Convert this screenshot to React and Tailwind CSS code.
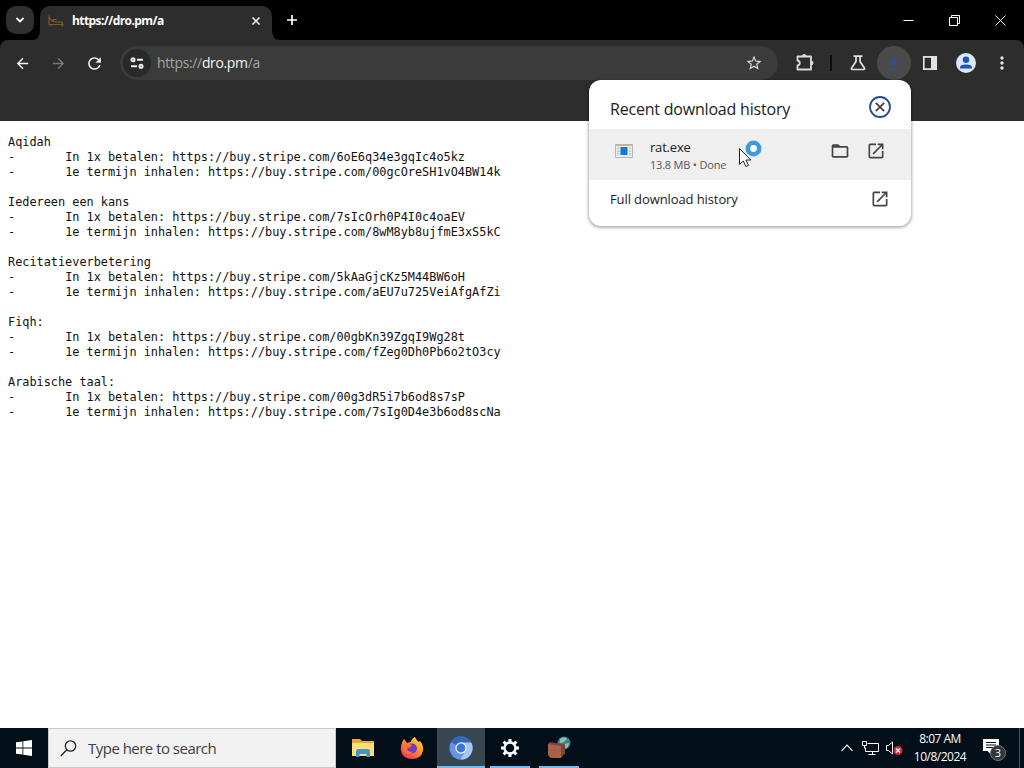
import React from 'react';
import { MdArrowBack, MdArrowForward, MdRefresh, MdStarBorder, MdOpenInNew, MdMoreVert, MdFolderOpen } from 'react-icons/md';

const sections = [
  {
    title: 'Aqidah',
    once: 'https://buy.stripe.com/6oE6q34e3gqIc4o5kz',
    term: 'https://buy.stripe.com/00gcOreSH1vO4BW14k',
  },
  {
    title: 'Iedereen een kans',
    once: 'https://buy.stripe.com/7sIcOrh0P4I0c4oaEV',
    term: 'https://buy.stripe.com/8wM8yb8ujfmE3xS5kC',
  },
  {
    title: 'Recitatieverbetering',
    once: 'https://buy.stripe.com/5kAaGjcKz5M44BW6oH',
    term: 'https://buy.stripe.com/aEU7u725VeiAfgAfZi',
  },
  {
    title: 'Fiqh:',
    once: 'https://buy.stripe.com/00gbKn39ZgqI9Wg28t',
    term: 'https://buy.stripe.com/fZeg0Dh0Pb6o2tO3cy',
  },
  {
    title: 'Arabische taal:',
    once: 'https://buy.stripe.com/00g3dR5i7b6od8s7sP',
    term: 'https://buy.stripe.com/7sIg0D4e3b6od8scNa',
  },
];

const TabStrip = () => (
  <div className="flex h-10 bg-black text-white">
    <div className="ml-1.5 mt-1.5 flex h-7 w-7 items-center justify-center rounded-[10px] bg-[#2f2f2f]">
      <svg width="10" height="10" viewBox="0 0 10 10" fill="none" stroke="white" strokeWidth="1.8">
        <path d="M1.5 3L5 6.5 8.5 3" />
      </svg>
    </div>
    {/* curved foot on each side of the active tab */}
    <svg className="mt-[30px] -ml-[2px]" width="8" height="10" viewBox="0 0 8 10">
      <path d="M8 0V10H0Q8 10 8 0Z" fill="#2d2d2d" />
    </svg>
    <div className="mt-1.5 flex h-[34px] w-[232px] items-center rounded-t-[10px] bg-[#2d2d2d] pb-[5px] pl-2 pr-[11px]">
      <svg width="16" height="16" viewBox="0 0 16 16" fill="none" stroke="#7c5b22" strokeWidth="1.2">
        <path d="M1 2.500v9h14.500M1 4.500l4 4 10 .8M5.500 8.500V6.500h3M3 11.500v1.500M14.500 9v4" />
      </svg>
      <span className="ml-2 flex-1 text-[12px] font-bold leading-4 tracking-[-0.57px]">https://dro.pm/a</span>
      <svg width="10" height="10" viewBox="0 0 10 10" stroke="white" strokeWidth="1.5">
        <path d="M1.5 1.5l7 7M8.5 1.5l-7 7" />
      </svg>
    </div>
    <svg className="mt-[30px]" width="8" height="10" viewBox="0 0 8 10">
      <path d="M0 0V10H8Q0 10 0 0Z" fill="#2d2d2d" />
    </svg>
    <svg className="ml-[6px] mt-[14px]" width="12" height="12" viewBox="0 0 12 12" stroke="white" strokeWidth="1.7">
      <path d="M6 1v10M1 6h10" />
    </svg>
    <div className="ml-auto flex items-center pr-[18px]">
      <svg className="mr-[35px]" width="11" height="11" viewBox="0 0 11 11" stroke="white" fill="none">
        <path d="M.5 5.5h10" />
      </svg>
      <svg className="mr-[35px]" width="11" height="11" viewBox="0 0 11 11" stroke="white" fill="none">
        <path d="M.5 2.5h8v8h-8zM2.5 2.5v-2h8v8h-2" />
      </svg>
      <svg width="11" height="11" viewBox="0 0 11 11" stroke="white" fill="none">
        <path d="M.5.5l10 10M10.5.5l-10 10" />
      </svg>
    </div>
  </div>
);

const Toolbar = () => (
  <div className="bg-black">
    <div className="flex h-[81px] items-start rounded-t-[8px] bg-[#2d2d2d] text-[#e4e4e4]">
      <div className="mt-[15px] flex gap-5 pl-[14px]">
        <MdArrowBack size={17} color="#f1f1f1" className="-mr-px" />
        <MdArrowForward size={17} color="#777777" className="-mr-px" />
        <MdRefresh size={19} color="#f1f1f1" className="-ml-px -mr-px -mt-px" />
      </div>
      <div className="ml-[17px] mt-[6px] flex h-[34px] w-[658px] items-center rounded-full bg-[#3b3b3b] pl-[3px]">
        <div className="flex h-7 w-7 items-center justify-center rounded-full bg-[#292929]">
          <svg width="14" height="12" viewBox="0 0 14 12" fill="none" stroke="#f1f1f1" strokeWidth="1.9">
            <circle cx="3" cy="2.8" r="1.6" />
            <path d="M7 2.8h6M1 9.2h6" />
            <circle cx="11" cy="9.2" r="1.6" />
          </svg>
        </div>
        <span className="ml-[6px] flex-1 text-[14px] leading-5 tracking-[-0.36px] text-[#a3a3a3]">
          https://<span className="text-[#f5f5f5]">dro.pm</span>/a
        </span>
        <MdStarBorder size={18} className="mr-[15px]" color="#d8d8d8" />
      </div>
      <div className="flex h-[46px] items-center">
        <svg className="ml-[17px]" width="20" height="18" viewBox="0 0 20 18" fill="none" stroke="#dcdcdc" strokeWidth="1.8" strokeLinejoin="round">
          <path d="M2.500 2.500H16v13H2.500v-4q2.300-.3 2.300-2.400T2.500 6.500z" />
          <path d="M7.200 2.500a2 2 0 0 1 4 0zM16 7a2 2 0 0 1 0 4z" fill="#dcdcdc" strokeWidth="1" />
        </svg>
        <div className="ml-[15px] h-4 w-[2px] bg-[#0c0c0c]" />
        <svg className="ml-[18px]" width="16" height="18" viewBox="0 0 16 18" fill="none" stroke="#e2e2e2" strokeWidth="1.7" strokeLinejoin="round">
          <path d="M3.500 2.200h9M6 2.200v5.300L1.600 14q-.7 1.500 1 1.500h10.800q1.700 0 1-1.500L10 7.500V2.200" />
        </svg>
        <div className="ml-[11px] flex h-[34px] w-[34px] items-center justify-center rounded-full bg-[#4a4a48]">
          <svg width="14" height="16" viewBox="0 0 14 16" fill="#30508c">
            <path d="M5.500 2h3v4.500H12L7 11.500l-5-5h3.500z" />
            <path d="M1.500 13.500h11V15h-11z" />
          </svg>
        </div>
        <svg className="ml-[11px]" width="16" height="16" viewBox="0 0 16 16">
          <path d="M1.800 1.800h12.400v12.400H1.800z" fill="none" stroke="#e2e2e2" strokeWidth="1.700" />
          <path d="M9 1.500h5.500v13H9z" fill="#e2e2e2" />
        </svg>
        <svg className="ml-[18px]" width="20" height="20" viewBox="0 0 20 20">
          <circle cx="10" cy="10" r="10" fill="#dbe7fb" />
          <circle cx="10" cy="6.800" r="3.200" fill="#1b57b8" />
          <path d="M4 15.500v-1q0-3 6-3t6 3v1z" fill="#1b57b8" />
        </svg>
        <MdMoreVert size={20} className="ml-4" />
      </div>
    </div>
  </div>
);

const DownloadBubble = () => (
  <div className="absolute left-[589px] top-20 h-[146px] w-[322px] overflow-hidden rounded-[12px] bg-white text-[#202124] shadow-[0_1px_3px_1px_rgba(0,0,0,0.3)]">
    <div className="flex h-[49px] items-center justify-between pl-[21px] pr-5">
      <span className="mt-[9px] text-[16px] leading-6 tracking-[-0.2px]">Recent download history</span>
      <svg className="mt-[5px]" width="22" height="22" viewBox="0 0 22 22" fill="none">
        <circle cx="11" cy="11" r="10" stroke="#1c4f96" strokeWidth="1.800" />
        <path d="M6.800 6.800l8.400 8.400M15.200 6.800l-8.400 8.400" stroke="#4a3a35" strokeWidth="1.700" />
      </svg>
    </div>
    <div className="flex h-[51px] items-center bg-[#efefef] pl-[26px] pr-[25px]">
      <svg className="-mt-2" width="18" height="14" viewBox="0 0 18 14">
        <path d="M.5.5h17v13H.5z" fill="#e8eef2" stroke="#b8b5ae" />
        <path d="M1 1.500h16" stroke="#d5b27a" />
        <path d="M2 4h3M2 7h3M2 10h3M14 4h2M14 7h2M14 10h2" stroke="#a8bdcb" />
        <path d="M5.500 3h7v8h-7z" fill="#1679cd" />
      </svg>
      <div className="ml-[17px] mt-[2px] flex-1">
        <div className="text-[13px] leading-[18px] tracking-[-0.2px]">rat.exe</div>
        <div className="text-[11px] leading-[17px] tracking-[-0.2px] text-[#55585c]">13.8 MB • Done</div>
      </div>
      <MdFolderOpen size={20} className="-mt-2" color="#444" />
      <MdOpenInNew size={20} className="-mt-2 ml-4" color="#444" />
    </div>
    <div className="flex h-[38px] items-center justify-between pl-[21px] pr-[21px]">
      <span className="text-[13px] leading-5 tracking-[-0.1px]">Full download history</span>
      <MdOpenInNew size={20} color="#444" />
    </div>
  </div>
);

// arrow pointer with the busy ring
const Pointer = () => (
  <svg className="absolute left-[738px] top-[138px]" width="26" height="30" viewBox="0 0 26 30">
    <circle cx="15.500" cy="10.500" r="5.700" fill="white" stroke="#3f9ae0" strokeWidth="4.500" />
    <path d="M1.500 10.500v16l3.800-3.500 2.600 5.500 2.600-1.200-2.600-5.300h5z" fill="white" stroke="#222" strokeWidth="1" />
  </svg>
);

const TaskbarItem = ({ children, active, open }) => (
  <div className={`flex h-10 w-12 flex-col items-center ${active ? 'bg-[#37474f]' : ''}`}>
    <div className="flex h-[38px] items-center justify-center pt-[2px]">{children}</div>
    {active && <div className="h-[2px] w-12 bg-[#76b9ed]" />}
    {open && <div className="h-[2px] w-10 bg-[#76b9ed]" />}
  </div>
);

const Taskbar = () => (
  <div className="flex h-10 bg-[#020e18] text-white">
    <div className="flex w-12 items-center justify-center">
      <svg width="16" height="16" viewBox="0 0 16 16" fill="white">
        <path d="M0 2.300L6.500 1.400v6.200H0zM7.300 1.300L16 0v7.600H7.300zM0 8.400h6.500v6.200L0 13.700zM7.300 8.400H16V16l-8.700-1.300z" />
      </svg>
    </div>
    <div className="flex w-[288px] items-center border border-[#c5cbce] bg-[#f2f2f2] pl-[11px]">
      <svg width="17" height="17" viewBox="0 0 17 17" fill="none" stroke="#222" strokeWidth="1.300">
        <circle cx="10.500" cy="6" r="5.200" />
        <path d="M6.800 9.800L.8 16" />
      </svg>
      <span className="ml-[11px] text-[15px] leading-5 tracking-[-0.52px] text-[#404040]">Type here to search</span>
    </div>
    <div className="ml-[3px] flex gap-px">
      <TaskbarItem>
        <svg width="22" height="20" viewBox="0 0 22 20">
          <path d="M0 1h8l2 2h12v15H0z" fill="#e9a938" />
          <path d="M0 5h22v13H0z" fill="#ffdf75" />
          <path d="M4 19v-6q0-2 2-2h10q2 0 2 2v6h-3.500v-3h-7v3z" fill="#4296cb" />
        </svg>
      </TaskbarItem>
      <TaskbarItem>
        <svg width="24" height="24" viewBox="0 0 24 24">
          <defs>
            <linearGradient id="fox" x1="0.9" y1="0" x2="0.2" y2="1">
              <stop offset="0" stopColor="#ffe43d" />
              <stop offset="0.45" stopColor="#ff9529" />
              <stop offset="1" stopColor="#f32d57" />
            </linearGradient>
          </defs>
          <path d="M4 3l3 4 4-1q0-3 4-5 1 3 4 5l1-1q4 5 3 10-2 8-11 8-9 0-11-8Q0 9 4 3z" fill="url(#fox)" />
          <circle cx="12" cy="12.500" r="5" fill="#743ac4" />
          <path d="M2 9q5-3 10 0l-2 2.500q-3 0-3 2 1 3 6 2-5 5-9 0z" fill="#ff7038" />
        </svg>
      </TaskbarItem>
      <TaskbarItem active>
        <svg width="24" height="24" viewBox="0 0 24 24">
          <circle cx="12" cy="12" r="11.500" fill="#6596e5" />
          <path d="M12 12L2 6A11.500 11.500 0 0 1 22.200 6.500z" fill="#3467ba" />
          <path d="M12 6.500h10.200A11.500 11.500 0 0 1 11.500 23.500l5-9z" fill="#a6c6f8" />
          <circle cx="12" cy="12" r="5.700" fill="#eaf1fe" />
          <circle cx="12" cy="12" r="4.400" fill="#3976d5" />
        </svg>
      </TaskbarItem>
      <TaskbarItem open>
        <svg width="20" height="20" viewBox="0 0 20 20" fill="none" stroke="white">
          <circle cx="10" cy="10" r="5.500" strokeWidth="2.400" />
          <g strokeWidth="3">
            <path d="M10 1v3M10 16v3M1 10h3M16 10h3M3.600 3.600l2.200 2.200M14.200 14.200l2.200 2.200M3.600 16.400l2.200-2.200M14.200 5.800l2.200-2.200" />
          </g>
        </svg>
      </TaskbarItem>
      <TaskbarItem open>
        <svg width="24" height="24" viewBox="0 0 24 24">
          <circle cx="17" cy="7" r="6.500" fill="#3f819b" />
          <path d="M13 3q4-3 7 0l-3 3-4 1zM18 8l4-1-1 4-3 1z" fill="#8cc5a1" />
          <path d="M1 8l2-2 15 2.500v9L14 22H4l-3-3z" fill="#7e4434" />
          <path d="M1 8l13 2v12H4l-3-3z" fill="#a9624c" />
          <path d="M1 14l13 1M7 9v5M5 15v6" stroke="#96543f" strokeWidth=".5" />
        </svg>
      </TaskbarItem>
    </div>
    <div className="ml-auto flex items-center">
      <svg className="mr-[9px]" width="12" height="8" viewBox="0 0 12 8" fill="none" stroke="white" strokeWidth="1.200">
        <path d="M.5 6.800L6 1.200l5.500 5.600" />
      </svg>
      <svg className="mr-[7px]" width="17" height="15" viewBox="0 0 17 15" fill="none" stroke="white">
        <path d="M5.500 2.500h11v8h-13v-4M.5.500h4v4h-4zM2.500 4.500v3M10.500 10.500v3M6.500 13.500h7" />
      </svg>
      <svg className="mr-[10px]" width="17" height="15" viewBox="0 0 17 15">
        <path d="M.5 4.500h2l4-3.500v12l-4-3.500h-2z" fill="none" stroke="white" />
        <circle cx="12" cy="9.500" r="4.500" fill="#d12b35" />
        <path d="M10 7.500l4 4M14 7.500l-4 4" stroke="white" strokeWidth="1.200" />
      </svg>
      <div className="w-[54px] whitespace-nowrap text-center text-[12px] leading-[18px] tracking-[-0.5px]">
        <div>8:07 AM</div>
        <div>10/8/2024</div>
      </div>
      <svg className="ml-[15px] mr-px" width="26" height="26" viewBox="0 0 26 26">
        <path d="M1 4h16v12H9v3.500L5.500 16H1z" fill="white" />
        <path d="M4 7.500h10M4 10h10M4 12.500h7" stroke="#020e18" />
        <circle cx="16" cy="18" r="7.500" fill="#30373d" stroke="#71777b" />
        <text x="16" y="22" textAnchor="middle" fill="white" fontSize="11">3</text>
      </svg>
      <div className="ml-[10px] mr-1 h-10 w-px bg-[#4a5359]" />
    </div>
  </div>
);

const App = () => (
  <div className="relative flex h-[768px] w-[1024px] flex-col overflow-hidden bg-white font-['Open_Sans','Noto_Sans',sans-serif]">
    <TabStrip />
    <Toolbar />
    <pre className="flex-1 px-2 pt-[14px] font-['DejaVu_Sans_Mono',monospace] text-[11.87px] leading-[15px] text-[#111] [tab-size:8]">
      {sections.map((s) => `${s.title}\n-\tIn 1x betalen: ${s.once}\n-\t1e termijn inhalen: ${s.term}`).join('\n\n')}
    </pre>
    <Taskbar />
    <DownloadBubble />
    <Pointer />
  </div>
);

export default App;
